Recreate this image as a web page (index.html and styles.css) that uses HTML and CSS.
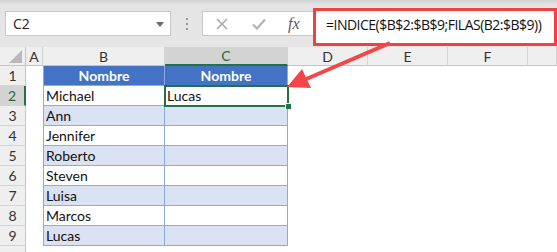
FILE: index.html
```html
<!DOCTYPE html>
<html lang="es">
<head>
    <meta charset="UTF-8">
    <title>INDICE y FILAS</title>
    <link rel="stylesheet" href="styles.css">
</head>
<body>

<div class="window">
    <!-- name box + formula bar -->
    <div class="toolbar">
        <div class="namebox">
            <span>C2</span>
            <svg class="caret" width="8" height="5" viewBox="0 0 8 5"><path d="M0 0h8L4 5z" fill="#6a6a6a"/></svg>
        </div>
        <div class="grip"><i></i><i></i><i></i></div>
        <div class="fbuttons">
            <svg class="fbtn" width="12" height="12" viewBox="0 0 12 12"><path d="M1 1L11 11M11 1L1 11" stroke="#a8a8a8" stroke-width="1.6"/></svg>
            <svg class="fbtn" width="14" height="12" viewBox="0 0 14 12"><path d="M1 6.5L5 10.5L13 1.5" stroke="#b4b4b4" stroke-width="2.2" fill="none"/></svg>
            <span class="fx">fx</span>
        </div>
        <div class="finput">=INDICE($B$2:$B$9;FILAS(B2:$B$9))</div>
    </div>

    <!-- worksheet -->
    <div class="sheet">
        <div class="ch corner"><svg width="13" height="13" viewBox="0 0 13 13"><path d="M13 0V13H0z" fill="#b9b9b9"/></svg></div>
        <div class="ch">A</div>
        <div class="ch">B</div>
        <div class="ch sel">C</div>
        <div class="ch">D</div>
        <div class="ch">E</div>
        <div class="ch">F</div>
        <div class="ch"></div>

        <div class="rh">1</div><div class="c"></div>
        <div class="t hd first">Nombre</div><div class="t hd">Nombre</div>
        <div class="c"></div><div class="c"></div><div class="c"></div><div class="c"></div>

        <div class="rh sel">2</div><div class="c"></div>
        <div class="t first">Michael</div><div class="t active">Lucas</div>
        <div class="c"></div><div class="c"></div><div class="c"></div><div class="c"></div>

        <div class="rh">3</div><div class="c"></div>
        <div class="t band first">Ann</div><div class="t band"></div>
        <div class="c"></div><div class="c"></div><div class="c"></div><div class="c"></div>

        <div class="rh">4</div><div class="c"></div>
        <div class="t first">Jennifer</div><div class="t"></div>
        <div class="c"></div><div class="c"></div><div class="c"></div><div class="c"></div>

        <div class="rh">5</div><div class="c"></div>
        <div class="t band first">Roberto</div><div class="t band"></div>
        <div class="c"></div><div class="c"></div><div class="c"></div><div class="c"></div>

        <div class="rh">6</div><div class="c"></div>
        <div class="t first">Steven</div><div class="t"></div>
        <div class="c"></div><div class="c"></div><div class="c"></div><div class="c"></div>

        <div class="rh">7</div><div class="c"></div>
        <div class="t band first">Luisa</div><div class="t band"></div>
        <div class="c"></div><div class="c"></div><div class="c"></div><div class="c"></div>

        <div class="rh">8</div><div class="c"></div>
        <div class="t first">Marcos</div><div class="t"></div>
        <div class="c"></div><div class="c"></div><div class="c"></div><div class="c"></div>

        <div class="rh">9</div><div class="c"></div>
        <div class="t band first">Lucas</div><div class="t band"></div>
        <div class="c"></div><div class="c"></div><div class="c"></div><div class="c"></div>

        <!-- next row, cut off by the window -->
        <div class="rh"></div><div class="c"></div>
        <div class="c"></div><div class="c"></div>
        <div class="c"></div><div class="c"></div><div class="c"></div><div class="c"></div>
    </div>

    <!-- annotation arrow pointing at C2 -->
    <svg class="arrow" width="557" height="252" viewBox="0 0 557 252">
        <line x1="390" y1="43" x2="304" y2="80" stroke="#f44646" stroke-width="4"/>
        <polygon points="287,87 302,69 311,88" fill="#f44646"/>
    </svg>
</div>

</body>
</html>
```

FILE: styles.css
```css
body {
    margin: 0;
    padding: 0;
    background-color: #fff;
    overflow: hidden;
}

.window {
    position: relative;
    width: 557px;
    height: 252px;
    overflow: hidden;
    font-family: Lato, "Liberation Sans", sans-serif;
}

/* formula bar */
.toolbar {
    display: flex;
    align-items: flex-start;
    box-sizing: border-box;
    height: 47px;
    padding: 11px 0 0 5px;
    background: linear-gradient(#d2d2d2, #e4e4e4 5px, #e6e6e6);
}

.namebox {
    box-sizing: border-box;
    width: 166px;
    height: 25px;
    display: flex;
    align-items: center;
    justify-content: space-between;
    padding: 0 6px 0 7px;
    background-color: #fff;
    border: 1px solid #c8c8c8;
    font-family: "Open Sans", sans-serif;
    font-size: 14px;
    color: #222;
}

.caret {
    margin-top: 1px;
}

.grip {
    width: 31px;
    height: 25px;
    display: flex;
    flex-direction: column;
    align-items: center;
    justify-content: center;
    gap: 3px;
}

.grip i {
    width: 2px;
    height: 2px;
    background-color: #9a9a9a;
}

.fbuttons {
    box-sizing: border-box;
    width: 111px;
    height: 25px;
    display: flex;
    align-items: center;
    padding-left: 13px;
    gap: 24px;
    background-color: #fff;
    border: 1px solid #c8c8c8;
    border-right: none;
}

.fx {
    font-family: "Liberation Serif", serif;
    font-style: italic;
    font-size: 16px;
    color: #5a5a5a;
    margin-left: -2px;
}

.finput {
    flex: 1;
    box-sizing: border-box;
    height: 38px;
    margin-top: -3px;
    padding-left: 10px;
    background-color: #fff;
    border: 3px solid #f24040;
    font-family: "Open Sans", sans-serif;
    font-size: 14px;
    letter-spacing: -0.5px;
    line-height: 28px;
    color: #111;
    white-space: nowrap;
}

/* worksheet grid */
.sheet {
    display: grid;
    grid-template-columns: 26px 17px 122px 123px 80px 80px 80px 1fr;
    grid-template-rows: 19px repeat(10, 20px);
    font-size: 14px;
}

.sheet > div {
    box-sizing: border-box;
}

.ch {
    display: flex;
    align-items: center;
    justify-content: center;
    background-color: #efefef;
    border-right: 1px solid #d4d4d4;
    border-bottom: 1px solid #c4c4c4;
    color: #333;
}

.ch.corner {
    align-items: flex-end;
    justify-content: flex-end;
    padding: 0 3px 2px 0;
    border-right-color: #c4c4c4;
}

.ch.sel {
    background-color: #d3d3d3;
    border-bottom: 2px solid #217346;
    color: #1f6b41;
}

.rh {
    display: flex;
    align-items: center;
    justify-content: center;
    background-color: #efefef;
    border-right: 1px solid #c4c4c4;
    border-bottom: 1px solid #d4d4d4;
    color: #333;
}

.rh.sel {
    background-color: #d3d3d3;
    border-right: 2px solid #217346;
    color: #1f6b41;
}

.c {
    background-color: #fff;
}

.t {
    padding: 1px 0 0 2px;
    line-height: 18px;
    background-color: #fff;
    border-right: 1px solid #8eaadb;
    border-bottom: 1px solid #8eaadb;
    color: #111;
}

.t.first {
    border-left: 1px solid #8eaadb;
}

.t.band {
    background-color: #d9e1f2;
}

.t.hd {
    background-color: #4472c4;
    color: #fff;
    font-weight: bold;
    text-align: center;
    padding-left: 0;
}

.t.active {
    position: relative;
    outline: 2px solid #217346;
    outline-offset: -1px;
    z-index: 1;
}

.t.active::after {
    content: "";
    position: absolute;
    right: -4px;
    bottom: -4px;
    width: 5px;
    height: 5px;
    background-color: #217346;
    border: 1px solid #fff;
    border-width: 1px 0 0 1px;
}

.arrow {
    position: absolute;
    top: 0;
    left: 0;
    pointer-events: none;
    z-index: 2;
}
```
